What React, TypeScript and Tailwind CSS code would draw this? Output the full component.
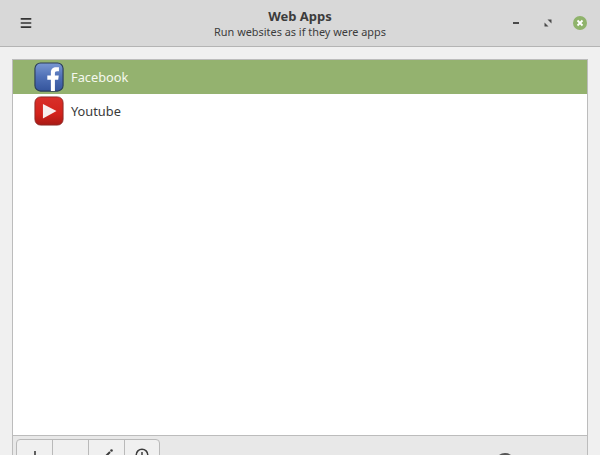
import { Menu } from "lucide-react";

function FacebookIcon() {
  return (
    <svg width="30" height="30" viewBox="0 0 32 32" className="shrink-0">
      <defs>
        <linearGradient id="fb" x1="0" y1="0" x2="0" y2="1">
          <stop offset="0" stopColor="#7a98d2" />
          <stop offset="0.5" stopColor="#4f70b6" />
          <stop offset="1" stopColor="#34549c" />
        </linearGradient>
      </defs>
      <rect x="1" y="1" width="30" height="30" rx="6" fill="url(#fb)" stroke="#2a3d58" strokeWidth="1.2" />
      <path
        d="M18 31V19h-3.8v-4.6H18v-3.2c0-3.9 2.3-5.7 5.6-5.7 1.3 0 2.4.1 3 .2v4.2h-2.1c-1.7 0-2.2.9-2.2 2.2v2.3h4.1l-.6 4.6h-3.5v12z"
        fill="#ffffff"
      />
    </svg>
  );
}

function YoutubeIcon() {
  return (
    <svg width="30" height="30" viewBox="0 0 32 32" className="shrink-0">
      <defs>
        <linearGradient id="yt" x1="0" y1="0" x2="0" y2="1">
          <stop offset="0" stopColor="#d8302a" />
          <stop offset="0.6" stopColor="#d3221b" />
          <stop offset="1" stopColor="#a81a15" />
        </linearGradient>
      </defs>
      <rect x="1" y="1" width="30" height="30" rx="6" fill="url(#yt)" stroke="#8c2a26" strokeWidth="1" />
      <path d="M9.5 8.5 24 16 9.5 24z" fill="#f7efee" />
    </svg>
  );
}

function ToolButton({ children, last }: { children?: React.ReactNode; last?: boolean }) {
  return (
    <div className={`flex h-[40px] items-start justify-center ${last ? "w-[34px]" : "w-[36px] border-r border-[#b9b9b9]"}`}>
      {children}
    </div>
  );
}

export default function App() {
  return (
    <div className="flex h-[455px] w-[600px] flex-col overflow-hidden bg-[#f0f0f0] font-['Noto_Sans',sans-serif] text-[#3c3c3c]">
      <header className="flex h-[47px] shrink-0 items-center border-b border-[#b4b4b4] bg-[#d8d8d8]">
        <div className="flex w-[104px] pl-[19px]">
          <Menu size={14} strokeWidth={2.8} className="text-[#333333]" />
        </div>
        <div className="flex-1 text-center">
          <div className="text-[13px] font-bold leading-[17px]">Web Apps</div>
          <div className="text-[10.9px] leading-[14px]">Run websites as if they were apps</div>
        </div>
        <div className="flex w-[104px] items-center">
          <div className="ml-[17px] h-[2px] w-[6px] bg-[#4a4a4a]" />
          <svg width="8" height="8" viewBox="0 0 8 8" className="ml-[25px]">
            <path d="M3.5 0.5H7.5V4.5zM4.5 7.5H0.5V3.5z" fill="#4a4a4a" />
          </svg>
          <div className="ml-[21px] flex h-[14px] w-[14px] items-center justify-center rounded-full bg-[#8fb36b]">
            <svg width="8" height="8" viewBox="0 0 8 8">
              <path d="M1.5 1.5l5 5M6.5 1.5l-5 5" stroke="#ffffff" strokeWidth="1.8" />
            </svg>
          </div>
        </div>
      </header>

      <div className="flex flex-1 flex-col px-[12px] pt-[12px]">
        <div className="h-[377px] shrink-0 border border-[#bcbcbc] bg-white">
          <div className="flex h-[34px] items-center gap-[7px] bg-[#94b26f] pl-[21px] text-[12.8px] text-[#f4f8ee]">
            <FacebookIcon />
            <span className="mt-[2px]">Facebook</span>
          </div>
          <div className="flex h-[34px] items-center gap-[7px] pl-[21px] text-[12.8px] text-[#3a3a3a]">
            <YoutubeIcon />
            <span className="mt-[2px]">Youtube</span>
          </div>
        </div>

        <div className="flex flex-1 items-start justify-between border-r border-l border-[#bcbcbc] bg-[#e8e8e8] pl-[3px] pt-[3px]">
          <div className="flex rounded-t-[4px] border border-[#b9b9b9] bg-[#f0f0f0]">
            <ToolButton>
              <svg width="12" height="12" viewBox="0 0 12 12" className="mt-[10px]">
                <path d="M6 1v10M1 6h10" stroke="#3c3c3c" strokeWidth="1.6" />
              </svg>
            </ToolButton>
            <ToolButton />
            <ToolButton>
              <svg width="14" height="14" viewBox="0 0 14 14" className="mt-[8px]">
                <path d="M3 11 10 4" stroke="#3c3c3c" strokeWidth="2" />
                <circle cx="11.5" cy="2.5" r="1.3" fill="#3c3c3c" />
              </svg>
            </ToolButton>
            <ToolButton last>
              <svg width="14" height="14" viewBox="0 0 14 14" className="mt-[8px]">
                <circle cx="7" cy="7" r="5.8" fill="none" stroke="#3c3c3c" strokeWidth="1.5" />
                <path d="M7 4v5" stroke="#3c3c3c" strokeWidth="1.5" />
              </svg>
            </ToolButton>
          </div>
          <div className="mr-[72px] mt-[14px] h-[20px] w-[20px] shrink-0 rounded-full bg-[#555555]" />
        </div>
      </div>
    </div>
  );
}
